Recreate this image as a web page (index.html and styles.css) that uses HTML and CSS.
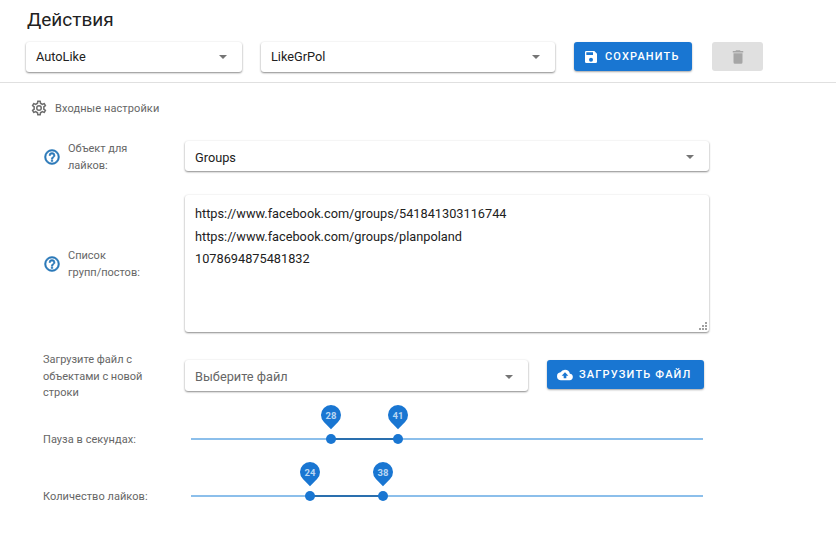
FILE: index.html
```html
<!DOCTYPE html>
<html lang="ru">
<head>
<meta charset="utf-8">
<title>Действия</title>
<link rel="stylesheet" href="styles.css">
</head>
<body>
<main class="page">
  <h1 class="title">Действия</h1>
  <div class="toolbar">
    <div class="select select-script"><span>AutoLike</span><i class="arrow"></i></div>
    <div class="select select-preset"><span>LikeGrPol</span><i class="arrow"></i></div>
    <button class="btn btn-save" type="button">
      <svg class="btn-icon" viewBox="0 0 24 24"><path d="M17 3H5a2 2 0 0 0-2 2v14a2 2 0 0 0 2 2h14a2 2 0 0 0 2-2V7l-4-4zm-5 16a3 3 0 1 1 0-6 3 3 0 0 1 0 6zm3-10H5V5h10v4z"/></svg>
      Сохранить
    </button>
    <button class="btn-delete" type="button" aria-label="Удалить">
      <svg viewBox="0 0 24 24"><path d="M6 19a2 2 0 0 0 2 2h8a2 2 0 0 0 2-2V7H6v12zM19 4h-3.5l-1-1h-5l-1 1H5v2h14V4z"/></svg>
    </button>
  </div>
  <hr class="divider">
  <div class="section-head">
    <svg class="gear" viewBox="0 0 24 24"><path d="M19.43 12.98c.04-.32.07-.64.07-.98s-.03-.66-.07-.98l2.11-1.65c.19-.15.24-.42.12-.64l-2-3.46c-.12-.22-.39-.3-.61-.22l-2.49 1c-.52-.4-1.08-.73-1.69-.98l-.38-2.65A.49.49 0 0 0 14 2h-4c-.25 0-.46.18-.49.42l-.38 2.65c-.61.25-1.17.59-1.69.98l-2.49-1a.5.5 0 0 0-.61.22l-2 3.46c-.13.22-.07.49.12.64l2.11 1.65c-.04.32-.07.65-.07.98s.03.66.07.98l-2.11 1.65c-.19.15-.24.42-.12.64l2 3.46c.12.22.39.3.61.22l2.49-1c.52.4 1.08.73 1.69.98l.38 2.65c.03.24.24.42.49.42h4c.25 0 .46-.18.49-.42l.38-2.65c.61-.25 1.17-.59 1.69-.98l2.49 1c.23.09.49 0 .61-.22l2-3.46c.12-.22.07-.49-.12-.64l-2.11-1.65zM17.45 11.27c.04.31.05.52.05.73s-.02.43-.05.73l-.14 1.13.89.7 1.08.84-.7 1.21-1.27-.51-1.04-.42-.9.68c-.43.32-.84.56-1.25.73l-1.06.43-.16 1.13-.2 1.35h-1.4l-.19-1.35-.16-1.13-1.06-.43c-.43-.18-.83-.41-1.23-.71l-.91-.7-1.06.43-1.27.51-.7-1.21 1.08-.84.89-.7-.14-1.13c-.03-.31-.05-.54-.05-.74s.02-.43.05-.73l.14-1.13-.89-.7-1.08-.84.7-1.21 1.27.51 1.04.42.9-.68c.43-.32.84-.56 1.25-.73l1.06-.43.16-1.13.2-1.35h1.39l.19 1.35.16 1.13 1.06.43c.43.18.83.41 1.23.71l.91.7 1.06-.43 1.27-.51.7 1.21-1.07.85-.89.7.14 1.13zM12 8a4 4 0 1 0 0 8 4 4 0 0 0 0-8zm0 6a2 2 0 1 1 0-4 2 2 0 0 1 0 4z"/></svg>
    <span>Входные настройки</span>
  </div>
  <div class="form">
    <div class="row row-object">
      <div class="label-help label-help-object">
        <svg class="help" viewBox="0 0 24 24"><path d="M11 18h2v-2h-2v2zm1-16a10 10 0 1 0 0 20 10 10 0 0 0 0-20zm0 18a8 8 0 1 1 0-16 8 8 0 0 1 0 16zm0-14a4 4 0 0 0-4 4h2a2 2 0 1 1 4 0c0 2-3 1.75-3 5h2c0-2.25 3-2.5 3-5a4 4 0 0 0-4-4z"/></svg>
        <span class="label">Объект для лайков:</span>
      </div>
      <div class="select select-wide"><span>Groups</span><i class="arrow"></i></div>
    </div>
    <div class="row row-list">
      <div class="label-help">
        <svg class="help" viewBox="0 0 24 24"><path d="M11 18h2v-2h-2v2zm1-16a10 10 0 1 0 0 20 10 10 0 0 0 0-20zm0 18a8 8 0 1 1 0-16 8 8 0 0 1 0 16zm0-14a4 4 0 0 0-4 4h2a2 2 0 1 1 4 0c0 2-3 1.75-3 5h2c0-2.25 3-2.5 3-5a4 4 0 0 0-4-4z"/></svg>
        <span class="label">Список<br>групп/постов:</span>
      </div>
      <div class="textbox">
        <div>https://www.facebook.com/groups/541841303116744</div>
        <div>https://www.facebook.com/groups/planpoland</div>
        <div>1078694875481832</div>
        <svg class="grip" viewBox="0 0 9 9"><path d="M7 1h2v2H7zM4 4h2v2H4zM7 4h2v2H7zM1 7h2v2H1zM4 7h2v2H4zM7 7h2v2H7z"/></svg>
      </div>
    </div>
    <div class="row row-file">
      <span class="label label-file">Загрузите файл с объектами с новой строки</span>
      <div class="select select-file"><span class="placeholder">Выберите файл</span><i class="arrow"></i></div>
      <button class="btn btn-upload" type="button">
        <svg class="btn-icon" viewBox="0 0 24 24"><path d="M19.35 10.04A7.49 7.49 0 0 0 12 4a7.5 7.5 0 0 0-6.65 4.04A6 6 0 0 0 6 20h13a5 5 0 0 0 .35-9.96zM14 13v4h-4v-4H7l5-5 5 5h-3z"/></svg>
        Загрузить файл
      </button>
    </div>
    <div class="row row-slider row-slider-first">
      <span class="label label-slider">Пауза в секундах:</span>
      <div class="slider">
        <div class="range" style="left:27.27%;width:13.13%"></div>
        <div class="thumb" style="left:27.27%"><b class="pin"><em>28</em></b></div>
        <div class="thumb" style="left:40.4%"><b class="pin"><em>41</em></b></div>
      </div>
    </div>
    <div class="row row-slider row-slider-second">
      <span class="label label-slider">Количество лайков:</span>
      <div class="slider">
        <div class="range" style="left:23.23%;width:14.27%"></div>
        <div class="thumb" style="left:23.23%"><b class="pin"><em>24</em></b></div>
        <div class="thumb" style="left:37.5%"><b class="pin"><em>38</em></b></div>
      </div>
    </div>
  </div>
</main>
</body>
</html>
```
FILE: styles.css
```css
* { box-sizing: border-box; }
html, body { margin: 0; background: #fff; }
body { font-family: Roboto, "Liberation Sans", sans-serif; color: #212121; overflow: hidden; }
.page { width: 836px; height: 538px; padding-top: 8px; }
.title { margin: 0 0 0 27px; font-size: 19px; font-weight: 400; line-height: 24px; color: #212121; }

.toolbar { display: flex; align-items: flex-start; margin-top: 10px; padding-left: 26px; }
.select {
  display: flex; align-items: center; justify-content: space-between;
  height: 30px; padding: 0 15px 0 10px; background: #fff; border-radius: 3px;
  font-size: 12.75px; color: #212121;
  box-shadow: 0 1px 2px rgba(0,0,0,.45), 0 0 3px rgba(0,0,0,.05);
}
.arrow { width: 0; height: 0; border-left: 4.5px solid transparent; border-right: 4.5px solid transparent; border-top: 4.5px solid #757575; }
.select-script { width: 216px; padding-bottom: 1px; }
.select-preset { width: 294px; margin-left: 19px; padding-bottom: 1px; }
.btn {
  display: flex; align-items: center; border: 0; border-radius: 3px; background: #1976d2; color: #fff;
  font-family: inherit; font-size: 11px; font-weight: 500; letter-spacing: 1.15px; text-transform: uppercase;
  box-shadow: 0 1px 2px rgba(0,0,0,.35);
}
.btn-icon { width: 16px; height: 16px; fill: #fff; flex: none; }
.btn-save { width: 118px; height: 29px; margin-left: 19px; padding: 0 0 0 9px; gap: 6px; }
.btn-delete {
  display: flex; align-items: center; justify-content: center;
  width: 51px; height: 29px; margin-left: 20px; padding: 0; border: 0; border-radius: 3px; background: #e0e0e0;
}
.btn-delete svg { width: 18px; height: 18px; fill: #a6a6a6; }

.divider { height: 1px; margin: 10px 0 0; border: 0; background: #e0e0e0; }

.section-head { display: flex; align-items: center; gap: 7px; margin: 16px 0 0 30px; font-size: 11px; color: #666; letter-spacing: .1px; height: 18px; }
.gear { width: 18px; height: 18px; fill: #6e6e6e; }

.form { display: flex; flex-direction: column; }
.row { display: flex; align-items: center; }
.label { font-size: 11px; color: #666; line-height: 17px; }
.label-help { display: flex; align-items: center; width: 185px; padding-left: 43px; gap: 7px; }
.label-help-object { padding-top: 2px; }
.help { width: 18px; height: 18px; fill: #2a78b8; stroke: #2a78b8; stroke-width: .7; flex: none; }
.label-help .label { width: 80px; }
.select-wide { width: 524px; padding-top: 2px; }
.row-object { margin-top: 21px; }
.row-list { margin-top: 21px; }
.textbox {
  position: relative; width: 524px; height: 137px; padding: 8px 10px; background: #fff; border-radius: 3px;
  font-size: 12.75px; line-height: 22.5px; color: #212121;
  box-shadow: 0 1px 2px rgba(0,0,0,.45), 0 0 3px rgba(0,0,0,.05);
}
.grip { position: absolute; right: 2px; bottom: 2px; width: 9px; height: 9px; fill: #a0a0a0; }

.row-file { margin-top: 28px; padding-left: 43px; align-items: flex-start; }
.label-file { width: 142px; padding-right: 22px; margin-top: -8px; line-height: 16.5px; }
.select-file { width: 343px; height: 31px; padding-top: 2px; }
.placeholder { color: #666; }
.btn-upload { width: 157px; height: 29px; margin-left: 19px; padding: 0 0 0 10px; gap: 6px; }

.row-slider { padding-left: 43px; height: 12px; }
.row-slider-first { margin-top: 31px; }
.row-slider-second { margin-top: 45px; }
.label-slider { width: 148px; padding-top: 1px; letter-spacing: .05px; }
.slider { position: relative; width: 512px; height: 2px; background: #8cbfeb; }
.range { position: absolute; top: 0; height: 2px; background: #2a6fae; }
.thumb { position: absolute; top: -4px; width: 10px; height: 10px; margin-left: -5px; border-radius: 50%; background: #1976d2; }
.pin {
  position: absolute; left: -5px; top: -29px; width: 20px; height: 20px;
  background: #1976d2; border-radius: 50% 50% 0 50%; transform: rotate(45deg);
  display: flex; align-items: center; justify-content: center;
}
.pin em { transform: rotate(-45deg); font-style: normal; font-size: 9.5px; font-weight: 700; color: #b9d6f3; }
```
